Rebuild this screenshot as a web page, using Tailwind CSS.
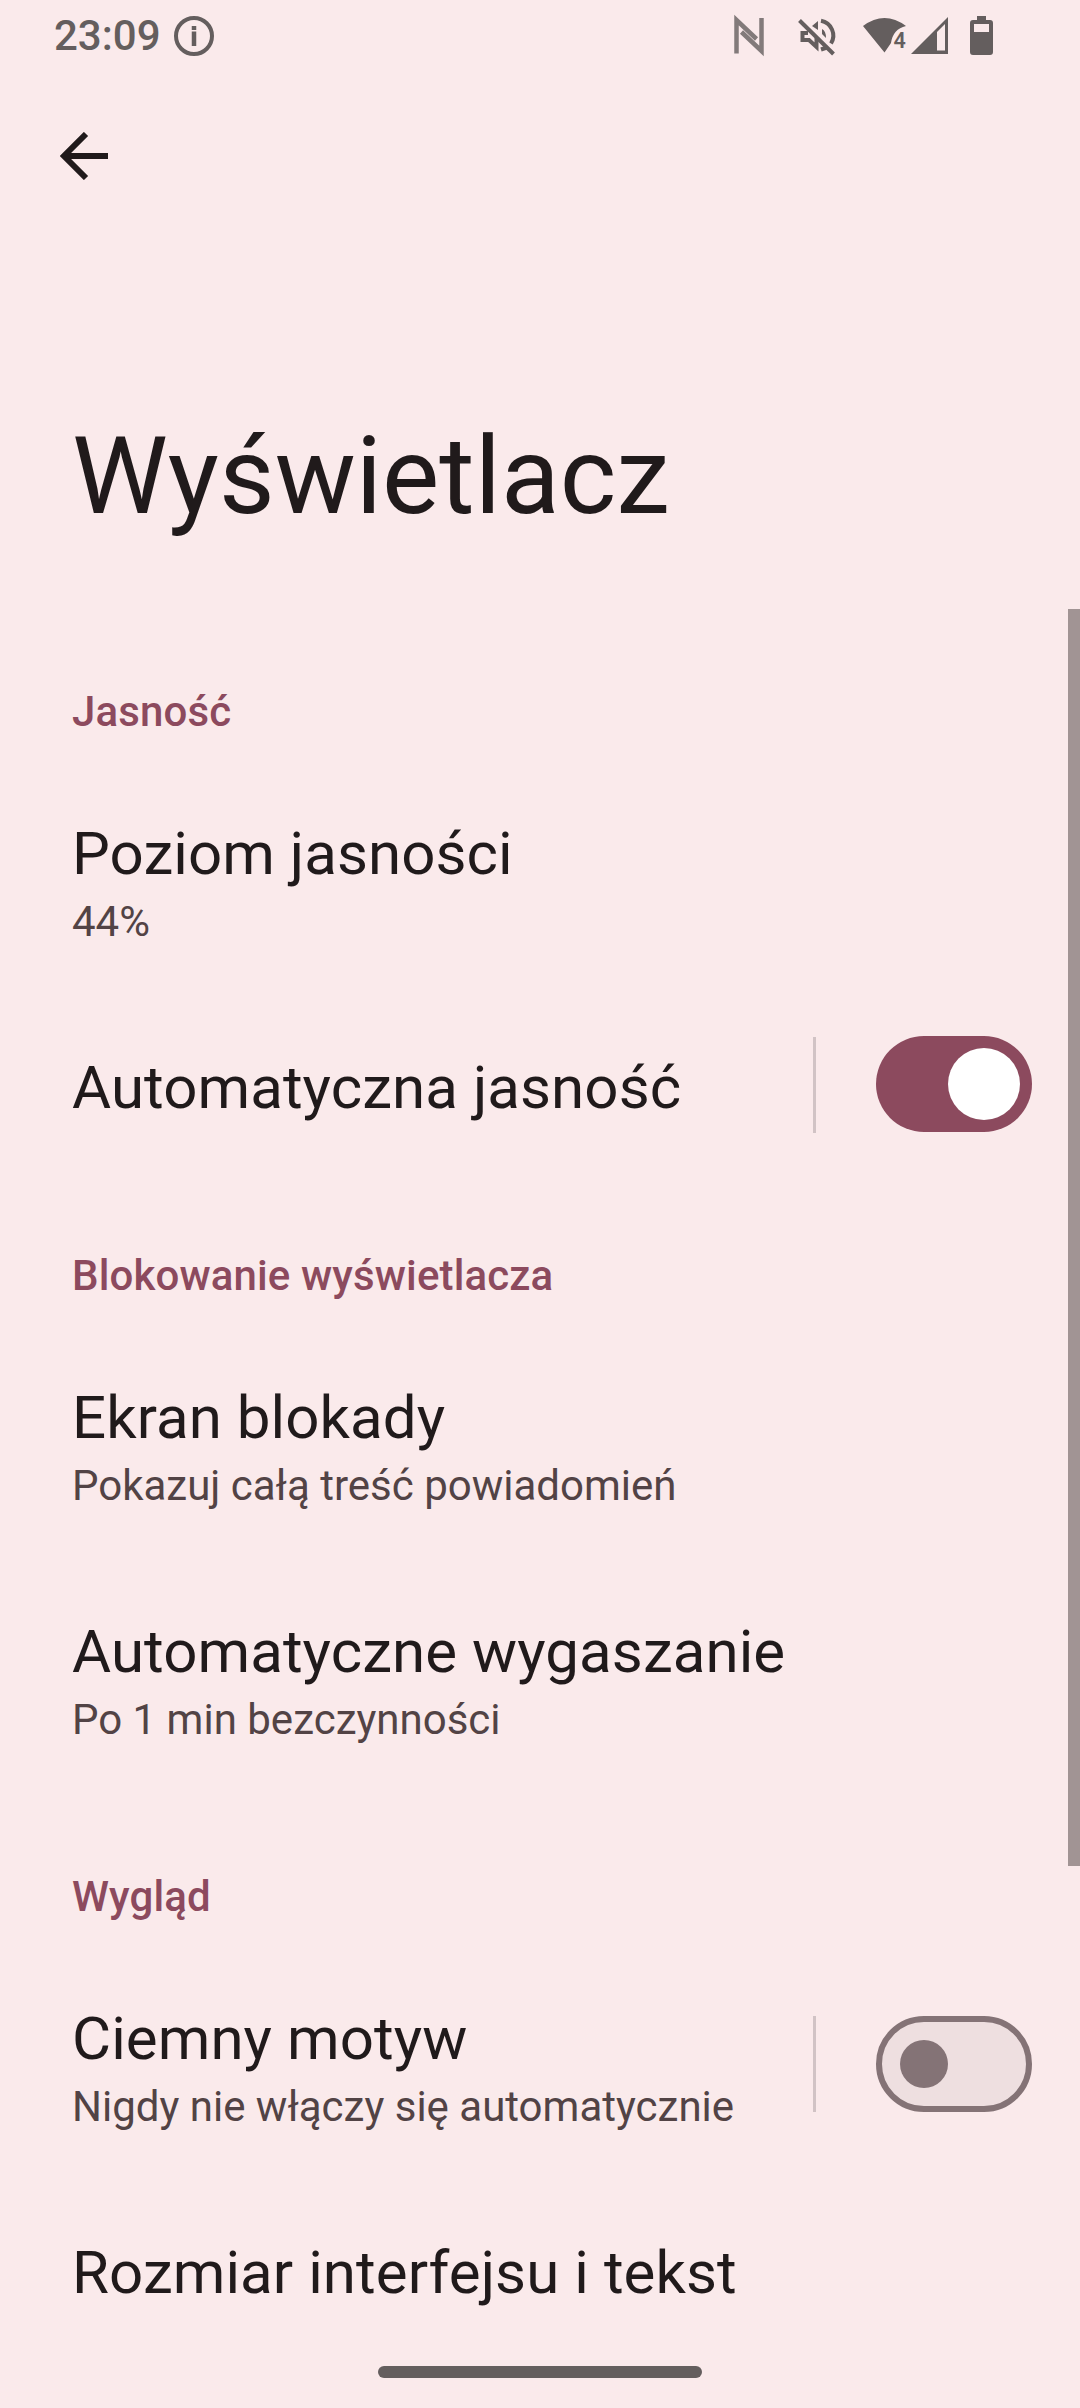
<!DOCTYPE html>
<html lang="pl">
<head>
<meta charset="utf-8">
<title>Wyświetlacz</title>
<script src="https://cdn.jsdelivr.net/npm/@tailwindcss/browser@4"></script>
</head>
<body class="relative flex h-[2408px] w-[1080px] flex-col overflow-hidden bg-[#faeaeb] font-['Roboto',sans-serif] text-[#201a1b]">
<header class="flex h-[72px] shrink-0 items-center pl-[54px] text-[#645e5e]">
  <span class="text-[42px] font-medium leading-none">23:09</span>
  <svg class="ml-[11px] size-[44px]" viewBox="0 0 44 44" fill="none" stroke="currentColor" stroke-width="4"><circle cx="22" cy="22" r="18"/><path d="M22 17.500v14.500M22 12v4" stroke-width="4.500"/></svg>
  <svg class="ml-auto mr-[60px] h-[72px] w-[320px]" viewBox="700 0 320 72" fill="currentColor">
    <!-- NFC -->
    <path d="M736.500 53.500V20L756.500 39M741.500 32L761.500 51V18" fill="none" stroke="currentColor" stroke-width="4.500" opacity=".8"/>
    <!-- muted -->
    <g fill="none" stroke="currentColor" stroke-width="4">
      <path d="M799.500 20.500L833.500 54"/>
      <path d="M808 33H802.500V40H809L816.500 47V38"/>
      <path d="M821 20.800A15 15 0 0 1 831 43.500M821 49.500L827 47.500"/>
    </g>
    <path d="M812 26L818 21V30ZM822 29Q826 31 826 38L822 34Z"/>
    <!-- wifi -->
    <path d="M863 26Q884.500 10 906 26Q893 29 891 43L884.500 52.500Z"/>
    <text x="893.500" y="47.500" font-size="21.500" font-weight="600" font-family="Roboto, sans-serif">4</text>
    <!-- signal -->
    <path fill-rule="evenodd" d="M911 54L948 17V54ZM937 32V50.500H945V24Z"/>
    <!-- battery -->
    <path fill-rule="evenodd" d="M977 16h9v4h4q3 0 3 3v29q0 3-3 3h-17q-3 0-3-3V23q0-3 3-3h4ZM974 24v8h15v-8Z"/>
  </svg>
</header>
<nav class="flex h-[168px] shrink-0 items-start pl-[60px] pt-[60px]">
  <svg class="size-12" viewBox="0 0 48 48" fill="none" stroke="currentColor" stroke-width="6"><path d="M48 24H4M26 2L4 24l22 22"/></svg>
</nav>
<main class="flex flex-col">
  <h1 class="mt-[173px] h-[126px] pl-[72px] text-[108px] leading-[126px]">Wyświetlacz</h1>
  <div class="mt-[99px] flex flex-col gap-[21px]">
    <section>
      <h2 class="flex h-[132px] flex-col justify-end pb-[34px] pl-[72px] text-[42px] font-medium leading-[49px] tracking-[0.13px] text-[#8c4a5e]">Jasność</h2>
      <div class="h-[234px] pl-[72px] pt-[49px]">
        <h3 class="text-[60px] leading-[70px] tracking-[0.08px]">Poziom jasności</h3>
        <p class="mt-2 text-[42px] leading-[49px] text-[#524345]">44%</p>
      </div>
      <div class="flex h-[177px] pl-[72px] pr-12">
        <h3 class="pt-[49px] text-[60px] leading-[70px] tracking-[0.08px]">Automatyczna jasność</h3>
        <span class="ml-auto mt-[33px] h-24 w-[3px] bg-[#d1c3c5]"></span>
        <span class="ml-[60px] mt-8 flex h-24 w-[156px] items-center justify-end rounded-full bg-[#8c4a5e] pr-3"><span class="size-[72px] rounded-full bg-white"></span></span>
      </div>
    </section>
    <section>
      <h2 class="flex h-[132px] flex-col justify-end pb-[34px] pl-[72px] text-[42px] font-medium leading-[49px] tracking-[0.13px] text-[#8c4a5e]">Blokowanie wyświetlacza</h2>
      <div class="h-[234px] pl-[72px] pt-[49px]">
        <h3 class="text-[60px] leading-[70px] tracking-[0.08px]">Ekran blokady</h3>
        <p class="mt-2 text-[42px] leading-[49px] text-[#524345]">Pokazuj całą treść powiadomień</p>
      </div>
      <div class="h-[234px] pl-[72px] pt-[49px]">
        <h3 class="text-[60px] leading-[70px] tracking-[0.08px]">Automatyczne wygaszanie</h3>
        <p class="mt-2 text-[42px] leading-[49px] text-[#524345]">Po 1 min bezczynności</p>
      </div>
    </section>
    <section>
      <h2 class="flex h-[132px] flex-col justify-end pb-[34px] pl-[72px] text-[42px] font-medium leading-[49px] tracking-[0.13px] text-[#8c4a5e]">Wygląd</h2>
      <div class="flex h-[234px] pl-[72px] pr-12">
        <div class="pt-[49px]">
          <h3 class="text-[60px] leading-[70px] tracking-[0.08px]">Ciemny motyw</h3>
          <p class="mt-2 text-[42px] leading-[49px] text-[#524345]">Nigdy nie włączy się automatycznie</p>
        </div>
        <span class="ml-auto mt-[61px] h-24 w-[3px] bg-[#d1c3c5]"></span>
        <span class="ml-[60px] mt-[61px] flex h-24 w-[156px] items-center rounded-full border-6 border-[#847376] bg-[#eedfe0] pl-[18px]"><span class="size-12 rounded-full bg-[#847376]"></span></span>
      </div>
      <div class="h-[177px] pl-[72px] pt-[49px]">
        <h3 class="text-[60px] leading-[70px] tracking-[0.08px]">Rozmiar interfejsu i tekst</h3>
      </div>
    </section>
  </div>
</main>
<div class="absolute left-[1068px] top-[609px] h-[1257px] w-3 bg-[#a19494]"></div>
<div class="absolute left-[378px] top-[2366px] h-3 w-[324px] rounded-full bg-[#645e5e]"></div>
</body>
</html>
